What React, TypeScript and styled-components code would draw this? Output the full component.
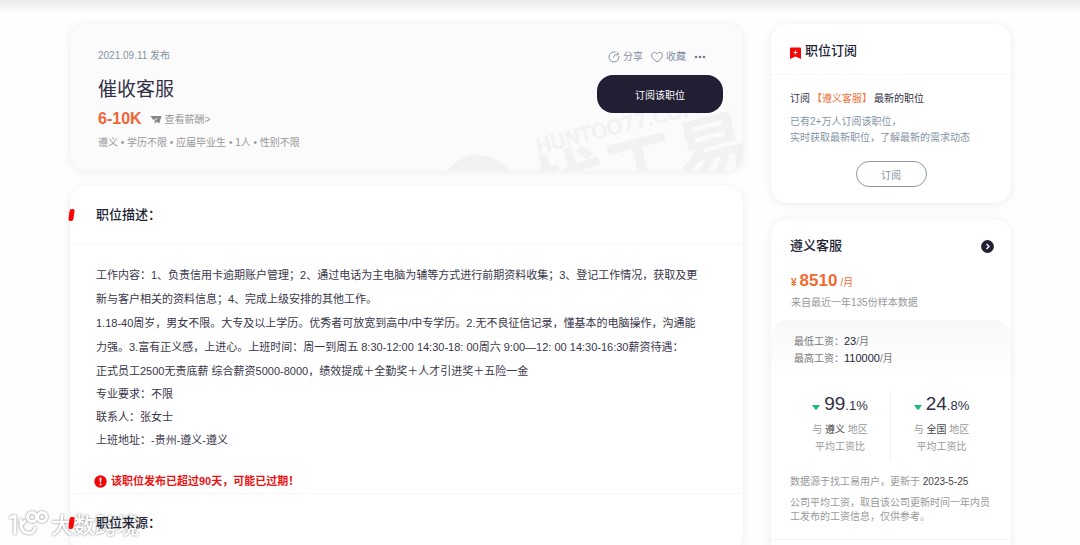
import React from "react";
import styled, { createGlobalStyle } from "styled-components";

const Global = createGlobalStyle`
  *, *::before, *::after { box-sizing: border-box; }
  body {
    margin: 0;
    background: #fefefe;
    color: #221f35;
    font-family: "Liberation Sans", "Noto Sans CJK SC", sans-serif;
    font-size: 10px;
    line-height: 16px;
    overflow-x: hidden;
  }
  h1, h2, p, ul, dl, dd { margin: 0; padding: 0; }
  ul { list-style: none; }
  button { font-family: inherit; cursor: pointer; padding: 0; }
  a { color: inherit; text-decoration: none; }
`;

const Page = styled.div`
  position: relative;
  height: 100vh;
  overflow: hidden;
`;

const TopShade = styled.div`
  height: 14px;
  background: linear-gradient(#ebebeb, #fefefe);
`;

const Columns = styled.div`
  display: grid;
  grid-template-columns: minmax(0, 1fr) 240px;
  gap: 28px;
  align-items: start;
  max-width: 1080px;
  margin: 0 auto;
  padding: 10px 69px 0 70px;
`;

const Stack = styled.div<{ $gap: number }>`
  display: flex;
  flex-direction: column;
  gap: ${(p) => p.$gap}px;
`;

const Card = styled.section<{ $bg?: string }>`
  position: relative;
  background: ${(p) => p.$bg || "#fff"};
  border-radius: 16px;
  box-shadow: 0 1px 8px rgba(0, 0, 0, 0.08);
`;

const JobHeader = styled(Card)`
  display: flex;
  justify-content: space-between;
  padding: 24px 20px 20px 28px;
  min-height: 147px;
  overflow: hidden;
`;

const Watermark = styled.svg`
  position: absolute;
  right: 0;
  bottom: 0;
`;

const JobInfo = styled.div`
  display: flex;
  flex-direction: column;
`;

const Posted = styled.p`
  color: #8494a3;
`;

const JobTitle = styled.h1`
  margin-top: 12px;
  font-size: 19px;
  line-height: 28px;
  font-weight: 400;
  color: #332f45;
`;

const SalaryRow = styled.div`
  display: flex;
  align-items: center;
  gap: 8px;
  margin-top: 5px;
`;

const Salary = styled.strong`
  color: #f26434;
  font-size: 16px;
  line-height: 20px;
`;

const SalaryLink = styled.a`
  display: flex;
  align-items: center;
  gap: 3px;
  padding-top: 2px;
  color: #999;
`;

const Muted = styled.p<{ $top?: number }>`
  margin-top: ${(p) => p.$top || 0}px;
  color: #999;
`;

const Actions = styled.div`
  position: relative;
  display: flex;
  flex-direction: column;
  gap: 10px;
  width: 126px;
  padding-top: 1px;
`;

const ActionRow = styled.div`
  display: flex;
  align-items: center;
  gap: 8px;
  padding-left: 11px;
`;

const IconButton = styled.button`
  display: flex;
  align-items: center;
  gap: 3px;
  border: 0;
  background: none;
  color: #8490a5;
  font-size: 10px;
  line-height: 16px;
`;

const PrimaryButton = styled.button`
  height: 38px;
  border: 0;
  border-radius: 16px;
  background: #221f35;
  color: #fff;
  font-size: 10px;
`;

const SectionHead = styled.header<{ $height: number }>`
  position: relative;
  z-index: 2;
  display: flex;
  align-items: center;
  height: ${(p) => p.$height}px;
  padding-left: 26px;
`;

const Marker = styled.span`
  position: absolute;
  left: -1px;
  width: 5px;
  height: 12px;
  border-radius: 2px;
  background: #f80505;
  transform: skewX(-8deg);
`;

const Heading = styled.h2`
  font-size: 13px;
  line-height: 20px;
  font-weight: 500;
`;

const JobBody = styled.div`
  padding: 18px 38px 4px 26px;
  border-top: 1px solid #f6f6f6;
  border-bottom: 1px solid #f6f6f6;
  font-size: 11px;
  color: #39364a;
`;

const Paragraph = styled.p`
  line-height: 24px;
`;

const Facts = styled.ul`
  line-height: 23px;
`;

const Warning = styled.p`
  display: flex;
  align-items: center;
  gap: 4px;
  margin: 21px 0 0 -2px;
  color: #ee1111;
  font-weight: 700;
`;

const CardHead = styled.header`
  display: flex;
  align-items: center;
  gap: 4px;
  height: 51px;
  padding: 4px 19px 0;
  border-bottom: 1px solid #f6f6f6;
`;

const BookmarkIcon = styled.svg`
  margin-top: 4px;
`;

const SubscribeBody = styled.div`
  padding: 16px 19px;
`;

const Lead = styled.p`
  color: #332f45;
`;

const Accent = styled.span`
  margin: 0 2px;
  color: #f2703a;
`;

const SubNote = styled.p`
  margin-top: 7px;
  color: #8494a3;
`;

const OutlineButton = styled.button`
  display: block;
  width: 71px;
  height: 26px;
  margin: 15px auto 0;
  border: 1px solid #8c97a6;
  border-radius: 13px;
  background: #fff;
  color: #8494a3;
  font-size: 10px;
`;

const WageHead = styled.header`
  display: flex;
  align-items: center;
  justify-content: space-between;
  padding: 17px 17px 0 19px;
`;

const RoundButton = styled.button`
  display: flex;
  border: 0;
  background: none;
`;

const WageTop = styled.div`
  padding: 14px 20px 9px;
`;

const Wage = styled.p`
  display: flex;
  align-items: baseline;
  gap: 3px;
  color: #f26a30;
  line-height: 22px;
`;

const WageValue = styled.strong`
  font-size: 17px;
`;

const WageRange = styled.dl`
  padding: 13px 23px 8px;
  border-radius: 16px 16px 0 0;
  background: linear-gradient(#f8f8f8, #fff);
  color: #777;
  line-height: 17px;
`;

const RangeRow = styled.div`
  display: flex;
`;

const RangeValue = styled.span`
  color: #221f35;
  font-size: 11px;
`;

const Compare = styled.div`
  display: grid;
  grid-template-columns: 1fr 1fr;
  padding: 15px 19px 0;
`;

const CompareCell = styled.div<{ $divided?: boolean }>`
  height: 70px;
  text-align: center;
  color: #999;
  line-height: 17px;
  border-right: ${(p) => (p.$divided ? "1px solid #f0f0f0" : "0")};
`;

const Percent = styled.p`
  display: flex;
  align-items: baseline;
  justify-content: center;
  margin-bottom: 1px;
  color: #332f45;
  font-size: 13px;
  line-height: 28px;
`;

const PercentWhole = styled.span`
  margin-left: 4px;
  font-size: 19px;
`;

const Strong = styled.span`
  color: #444;
`;

const Notes = styled.footer`
  padding: 14px 19px 15px;
  color: #999;
`;

const NoteText = styled.p`
  margin-top: 6px;
  line-height: 14px;
`;

const WageMore = styled.div`
  height: 40px;
  border-top: 1px solid #f4f4f4;
`;

const Brand = styled.div`
  position: absolute;
  z-index: 1;
  left: 8px;
  bottom: 5px;
`;

const BrandMark = styled.svg`
  display: block;
  filter: drop-shadow(0 0 1px rgba(0, 0, 0, 0.5));
`;

const Down = () => (
  <svg width="8" height="5" viewBox="0 0 8 5" aria-hidden="true">
    <path d="M0 0h8L5 4.3q-1 .9-2 0z" fill="#1fb978" />
  </svg>
);

const facts = ["专业要求：不限", "联系人：张女士", "上班地址：-贵州-遵义-遵义"];

const comparisons = [
  { whole: "99", rest: ".1%", area: "遵义" },
  { whole: "24", rest: ".8%", area: "全国" },
];

export default function App() {
  return (
    <Page>
      <Global />
      <TopShade />
      <Columns>
        <Stack as="main" $gap={15}>
          <JobHeader $bg="#fbfbfb">
            <Watermark width="310" height="90" viewBox="0 0 310 90" aria-hidden="true">
              <circle cx="45" cy="113" r="39" fill="#f2f2f2" />
              <g transform="translate(104 118) rotate(-14)" fill="#f2f2f2" fontWeight="700">
                <text x="12" y="-44" fontSize="20" fontWeight="400" stroke="#f2f2f2" fontFamily="DejaVu Sans, sans-serif">HUNTOO77.COM</text>
                <text x="0" y="20" fontSize="73" fontFamily="Noto Sans CJK SC, sans-serif">找工易</text>
              </g>
            </Watermark>
            <JobInfo>
              <Posted>2021.09.11 发布</Posted>
              <JobTitle>催收客服</JobTitle>
              <SalaryRow>
                <Salary>6-10K</Salary>
                <SalaryLink href="#salary">
                  <svg width="12" height="10" viewBox="0 0 12 10" aria-hidden="true">
                    <path d="M.5 1h11L9.200 8.500 6.500 6.800 5 9 4.300 6 8.500 2.800 3.200 5z" fill="#888" />
                  </svg>
                  查看薪酬&gt;
                </SalaryLink>
              </SalaryRow>
              <Muted $top={6}>遵义 • 学历不限 • 应届毕业生 • 1人 • 性别不限</Muted>
            </JobInfo>
            <Actions>
              <ActionRow>
                <IconButton type="button">
                  <svg width="12" height="12" viewBox="0 0 12 12" fill="none" stroke="#8490a5" aria-hidden="true">
                    <path d="M7.500 1.200A5 5 0 1 0 10.900 5M5.500 6.700C5.700 4.500 7.500 3 10.500 2.900M8.800 1.200l1.900 1.700L9 4.700" />
                  </svg>
                  分享
                </IconButton>
                <IconButton type="button">
                  <svg width="12" height="12" viewBox="0 0 12 12" fill="none" stroke="#8490a5" aria-hidden="true">
                    <path d="M6 11C3 8.800.6 6.800.6 4.200.6 1 4.500.4 6 3 7.500.4 11.400 1 11.400 4.200 11.400 6.800 9 8.800 6 11z" />
                  </svg>
                  收藏
                </IconButton>
                <IconButton type="button" aria-label="更多">
                  <svg width="12" height="4" viewBox="0 0 12 4" fill="#6f7a90" aria-hidden="true">
                    <circle cx="2" cy="2" r="1.300" />
                    <circle cx="6" cy="2" r="1.300" />
                    <circle cx="10" cy="2" r="1.300" />
                  </svg>
                </IconButton>
              </ActionRow>
              <PrimaryButton type="button">订阅该职位</PrimaryButton>
            </Actions>
          </JobHeader>

          <Card>
            <SectionHead $height={58}>
              <Marker />
              <Heading>职位描述：</Heading>
            </SectionHead>
            <JobBody>
              <Paragraph>
                工作内容：1、负责信用卡逾期账户管理；2、通过电话为主电脑为辅等方式进行前期资料收集；3、登记工作情况，获取及更新与客户相关的资料信息；4、完成上级安排的其他工作。
              </Paragraph>
              <Paragraph>
                1.18-40周岁，男女不限。大专及以上学历。优秀者可放宽到高中/中专学历。2.无不良征信记录，懂基本的电脑操作，沟通能力强。3.富有正义感，上进心。上班时间：周一到周五 8:30-12:00 14:30-18: 00周六 9:00—12: 00 14:30-16:30薪资待遇：
                <br />
                正式员工2500无责底薪 综合薪资5000-8000，绩效提成＋全勤奖＋人才引进奖＋五险一金
              </Paragraph>
              <Facts>
                {facts.map((f) => (
                  <li key={f}>{f}</li>
                ))}
              </Facts>
              <Warning>
                <svg width="13" height="13" viewBox="0 0 13 13" aria-hidden="true">
                  <circle cx="6.500" cy="6.500" r="6.200" fill="#f00808" />
                  <path d="M5.500 2.800h2L7.100 7.500H5.900z" fill="#fff" />
                  <circle cx="6.500" cy="9.400" r="1" fill="#fff" />
                </svg>
                该职位发布已超过90天，可能已过期！
              </Warning>
            </JobBody>
            <SectionHead $height={58}>
              <Marker />
              <Heading>职位来源：</Heading>
            </SectionHead>
          </Card>
        </Stack>

        <Stack as="aside" $gap={16}>
          <Card>
            <CardHead>
              <BookmarkIcon width="11" height="12" viewBox="0 0 11 12" aria-hidden="true">
                <path d="M0 1.500Q0 .5 1 .5h9q1 0 1 1V12L5.500 9.500 0 12z" fill="#f80505" />
                <path d="M5.500 3.500v4M3.500 5.500h4" stroke="#fff" />
              </BookmarkIcon>
              <Heading>职位订阅</Heading>
            </CardHead>
            <SubscribeBody>
              <Lead>
                订阅<Accent>【遵义客服】</Accent>最新的职位
              </Lead>
              <SubNote>
                已有2+万人订阅该职位，
                <br />
                实时获取最新职位，了解最新的需求动态
              </SubNote>
              <OutlineButton type="button">订阅</OutlineButton>
            </SubscribeBody>
          </Card>

          <Card>
            <WageHead>
              <Heading>遵义客服</Heading>
              <RoundButton type="button" aria-label="查看详情">
                <svg width="13" height="13" viewBox="0 0 13 13" aria-hidden="true">
                  <circle cx="6.500" cy="6.500" r="6.400" fill="#221f35" />
                  <path d="M5.500 4l2.500 2.500L5.500 9" fill="none" stroke="#fff" strokeWidth="1.400" />
                </svg>
              </RoundButton>
            </WageHead>
            <WageTop>
              <Wage>
                <strong>¥</strong>
                <WageValue>8510</WageValue>
                <span>/月</span>
              </Wage>
              <Muted $top={1}>来自最近一年135份样本数据</Muted>
            </WageTop>
            <WageRange>
              <RangeRow>
                <dt>最低工资：</dt>
                <dd><RangeValue>23</RangeValue>/月</dd>
              </RangeRow>
              <RangeRow>
                <dt>最高工资：</dt>
                <dd><RangeValue>110000</RangeValue>/月</dd>
              </RangeRow>
            </WageRange>
            <Compare>
              {comparisons.map((c, i) => (
                <CompareCell key={c.area} $divided={i === 0}>
                  <Percent>
                    <Down />
                    <PercentWhole>{c.whole}</PercentWhole>
                    {c.rest}
                  </Percent>
                  <p>与 <Strong>{c.area}</Strong> 地区</p>
                  <p>平均工资比</p>
                </CompareCell>
              ))}
            </Compare>
            <Notes>
              <p>数据源于找工易用户，更新于 <Strong>2023-5-25</Strong></p>
              <NoteText>公司平均工资，取自该公司更新时间一年内员工发布的工资信息，仅供参考。</NoteText>
            </Notes>
            <WageMore />
          </Card>
        </Stack>
      </Columns>

      <Brand>
        <BrandMark width="136" height="32" viewBox="0 0 136 32" role="img" aria-label="大数跨境">
          <g fill="none" stroke="#fff" strokeWidth="3" strokeLinecap="round" strokeLinejoin="round">
            <path d="M3 9.500L7 8v17M13 12v5c0 9 12 11 14 3M13 17l4-4" />
            <circle cx="24" cy="9" r="4.500" />
            <circle cx="34" cy="9" r="4.500" />
          </g>
          <text x="43" y="25" fontSize="22" fontWeight="500" fill="#fff" fontFamily="Noto Sans CJK SC, sans-serif">大数跨境</text>
        </BrandMark>
      </Brand>
    </Page>
  );
}
